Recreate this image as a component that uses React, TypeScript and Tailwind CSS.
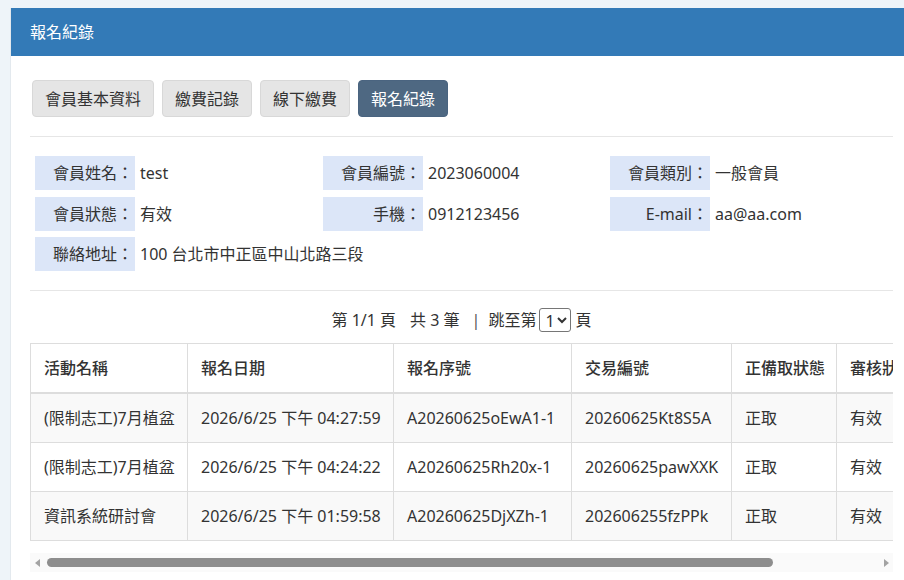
import React from 'react';

const tabs = [
    { label: '會員基本資料', active: false },
    { label: '繳費記錄', active: false },
    { label: '線下繳費', active: false },
    { label: '報名紀錄', active: true },
];

const info = [
    { label: '會員姓名：', value: 'test' },
    { label: '會員編號：', value: '2023060004' },
    { label: '會員類別：', value: '一般會員' },
    { label: '會員狀態：', value: '有效' },
    { label: '手機：', value: '0912123456' },
    { label: 'E-mail：', value: 'aa@aa.com' },
    { label: '聯絡地址：', value: '100 台北市中正區中山北路三段' },
];

const columns = [
    { title: '活動名稱', w: 'w-[157px]' },
    { title: '報名日期', w: 'w-[206px]' },
    { title: '報名序號', w: 'w-[178px]' },
    { title: '交易編號', w: 'w-[160px]' },
    { title: '正備取狀態', w: 'w-[105px]' },
    { title: '審核狀態', w: 'w-[100px]' },
    { title: '備註', w: 'w-[76px]' },
];

const rows = [
    ['(限制志工)7月植盆', '2026/6/25 下午 04:27:59', 'A20260625oEwA1-1', '20260625Kt8S5A', '正取', '有效', ''],
    ['(限制志工)7月植盆', '2026/6/25 下午 04:24:22', 'A20260625Rh20x-1', '20260625pawXXK', '正取', '有效', ''],
    ['資訊系統研討會', '2026/6/25 下午 01:59:58', 'A20260625DjXZh-1', '202606255fzPPk', '正取', '有效', ''],
];

export default function App() {
    return (
        <div className="min-h-screen overflow-hidden bg-[#eef4f9] pt-[8px] pl-[10px] text-[16px] text-[#333] font-['Noto_Sans','Noto_Sans_CJK_TC',sans-serif]">
            <div className="w-[903px] bg-white border-l border-[#e3e9ee] pb-[20px]">
                {/* Header */}
                <div className="h-[48px] bg-[#337ab7] pl-[19px] pr-[20px] flex items-center text-white leading-[22px]">報名紀錄</div>

                <div className="pl-[19px] pr-[20px] pt-[24px]">
                    {/* Tabs */}
                    <div className="flex gap-[8px] pl-[2px]">
                        {tabs.map((t) => (
                            <button
                                key={t.label}
                                className={
                                    t.active
                                        ? 'h-[37px] px-[12px] rounded-[4px] border border-[#4a6480] bg-[#4e6882] text-white leading-[22px]'
                                        : 'h-[37px] px-[12px] rounded-[4px] border border-[#d8d8d8] bg-[#e5e5e5] text-[#333] leading-[22px]'
                                }
                            >
                                {t.label}
                            </button>
                        ))}
                    </div>

                    <div className="mt-[19px] border-t border-[#e6e6e6]" />

                    {/* Member info */}
                    <div className="mt-[19px] pl-[5px] grid grid-cols-[288px_287px_1fr] gap-y-[6.5px]">
                        {info.map((item) => (
                            <div key={item.label} className="flex items-center whitespace-nowrap">
                                <div className="w-[100px] shrink-0 h-[34px] bg-[#dce6f8] flex items-center justify-end pr-[2px] leading-[22px]">{item.label}</div>
                                <div className="ml-[5px] leading-[22px]">{item.value}</div>
                            </div>
                        ))}
                    </div>

                    <div className="mt-[19px] border-t border-[#e6e6e6]" />

                    {/* Pager */}
                    <div className="mt-[16px] flex items-center justify-center leading-[22px] h-[25px]">
                        <span>第 1/1 頁</span>
                        <span className="ml-[14px]">共 3 筆</span>
                        <span className="ml-[12px] text-[#555]">|</span>
                        <span className="ml-[8px]">跳至第</span>
                        <select className="ml-[3px] h-[24px] w-[32px] border border-[#767676] rounded-[3px] text-[16px] leading-[20px] pl-[1px]" defaultValue="1">
                            <option value="1">1</option>
                        </select>
                        <span className="ml-[4px]">頁</span>
                    </div>

                    {/* Records table */}
                    <div className="mt-[11px] overflow-hidden">
                        <table className="w-[982px] table-fixed border-collapse border border-[#dddddd]">
                            <colgroup>
                                {columns.map((c) => (
                                    <col key={c.title} className={c.w} />
                                ))}
                            </colgroup>
                            <thead>
                                <tr>
                                    {columns.map((c) => (
                                        <th key={c.title} className="text-left font-medium px-[13px] py-[13px] leading-[22px] border border-[#dddddd] border-b-2 whitespace-nowrap overflow-hidden">
                                            {c.title}
                                        </th>
                                    ))}
                                </tr>
                            </thead>
                            <tbody>
                                {rows.map((r, idx) => (
                                    <tr key={idx} className={idx % 2 === 0 ? 'bg-[#f9f9f9]' : 'bg-white'}>
                                        {r.map((cell, ci) => (
                                            <td key={ci} className="px-[13px] py-[13px] leading-[22px] border border-[#dddddd] whitespace-nowrap">
                                                {cell}
                                            </td>
                                        ))}
                                    </tr>
                                ))}
                            </tbody>
                        </table>
                    </div>

                    {/* Horizontal scrollbar */}
                    <div className="mt-[12px] h-[19px] bg-[#fafafa] flex items-center">
                        <div className="w-[14px] h-full flex items-center justify-center">
                            <div className="w-0 h-0 border-y-[4px] border-y-transparent border-r-[5px] border-r-[#a3a3a3]" />
                        </div>
                        <div className="flex-1 h-full flex items-center">
                            <div className="ml-[3px] w-[726px] h-[9px] rounded-full bg-[#8e8e8e]" />
                        </div>
                        <div className="w-[14px] h-full flex items-center justify-center">
                            <div className="w-0 h-0 border-y-[4px] border-y-transparent border-l-[5px] border-l-[#a3a3a3]" />
                        </div>
                    </div>
                </div>
            </div>
        </div>
    );
}
